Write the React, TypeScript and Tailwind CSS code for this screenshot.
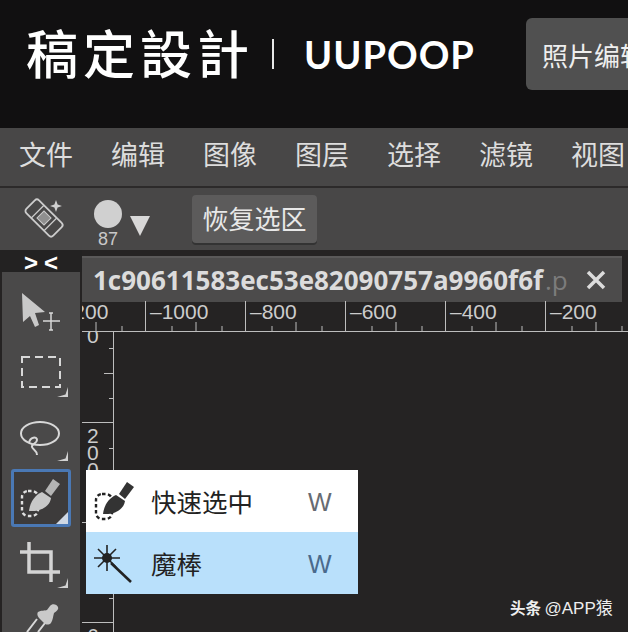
const cjk = "font-['Noto_Sans_CJK_SC',sans-serif]";

const menus = ["文件", "编辑", "图像", "图层", "选择", "滤镜", "视图"];
const hLabels = ["–1200", "–1000", "–800", "–600", "–400", "–200"];
const vLabels = ["0", "200", "400", "600"];

function Corner({ className }: { className: string }) {
  return (
    <svg width="11" height="10" viewBox="0 0 11 10" className={`absolute ${className}`}>
      <path d="M0 10H11V0L8.5 7.5Z" fill="#d2d2d2" />
    </svg>
  );
}

function Bandage() {
  return (
    <svg width="44" height="46" viewBox="0 0 44 46" fill="none">
      <g transform="rotate(45 21 22)" stroke="#cccccc" strokeWidth="1.8">
        <rect x="2" y="13" width="38" height="18" rx="3" />
        <path d="M12 13V31M30 13V31" strokeWidth="1.2" />
        <rect x="16" y="17" width="10" height="10" fill="#8f8f8f" strokeWidth="1" />
      </g>
      <path d="M33 4l1.6 4.4L39 10l-4.4 1.6L33 16l-1.6-4.4L27 10l4.4-1.6z" fill="#d0d0d0" />
    </svg>
  );
}

function ArrowTool() {
  return (
    <svg width="42" height="40" viewBox="0 0 42 40" fill="none">
      <path d="M2 2L25 21L15 22L19 34L15 36L10 25L3 31Z" fill="#c9c9c9" />
      <path d="M31 22V39M23 30H40M29 22H33M29 39H33" stroke="#d8d8d8" strokeWidth="1.5" />
    </svg>
  );
}

function MarqueeTool() {
  return (
    <svg width="42" height="34" viewBox="0 0 42 34" fill="none">
      <rect x="2" y="2" width="38" height="30" stroke="#d8d8d8" strokeWidth="2" strokeDasharray="8 5" />
    </svg>
  );
}

function LassoTool() {
  return (
    <svg width="42" height="46" viewBox="0 0 42 46" fill="none" stroke="#d8d8d8" strokeWidth="2">
      <ellipse cx="20" cy="16.5" rx="19" ry="11.5" />
      <path d="M9 26C10 20 17 19 17 23C17 27 11 27 12 30C13 33 17 33 17 38" />
    </svg>
  );
}

function QuickSelectIcon({ color, handle, dash }: { color: string; handle: string; dash: string }) {
  return (
    <svg width="42" height="40" viewBox="0 0 42 40" fill="none">
      <rect x="2" y="13" width="16" height="25" rx="6" stroke={dash} strokeWidth="2.4" strokeDasharray="3.5 2.5" />
      <path d="M9 33C10 24 15 17 22 14L31 20C30 28 21 34 9 33Z" fill={color} />
      <path d="M25 13L33 1L40 6L31 18Z" fill={handle} />
    </svg>
  );
}

function CropTool() {
  return (
    <svg width="42" height="44" viewBox="0 0 42 44" fill="none" stroke="#d4d4d4" strokeWidth="3.5">
      <path d="M0 11H31V41" />
      <path d="M9 1V31H40" />
    </svg>
  );
}

function DropperTool() {
  return (
    <svg width="42" height="30" viewBox="0 0 42 30" fill="none">
      <path d="M17 16L7 29M25 20L18 29" stroke="#d8d8d8" strokeWidth="2" />
      <path d="M18 9C21 7 25 8 27 7L30 3C32 0 37 1 38 4C39 6 37 8 34 10C33 13 33 17 31 20C29 22 26 22 24 20L19 15C17 13 17 10 18 9Z" fill="#c9c9c9" />
    </svg>
  );
}

function WandIcon() {
  return (
    <svg width="40" height="40" viewBox="0 0 40 40" fill="none" stroke="#222222">
      <path d="M17 20L37 39" strokeWidth="2.6" />
      <path d="M13 2V28M0 15H26M4 6L22 24M22 6L4 24" strokeWidth="1.6" />
      <circle cx="13" cy="15" r="5" fill="#222222" stroke="none" />
    </svg>
  );
}

function HTicks() {
  return (
    <svg width="100" height="14" viewBox="0 0 100 14" className="absolute bottom-0 left-0" stroke="#bdbdbd" strokeWidth="1">
      <path d="M26 14V9M50 14V5M76 14V9" />
    </svg>
  );
}

function VTicks() {
  return (
    <svg width="14" height="100" viewBox="0 0 14 100" className="absolute right-0 top-0" stroke="#bdbdbd" strokeWidth="1">
      <path d="M14 25.5H10M14 50.5H5M14 75.5H10" />
    </svg>
  );
}

export default function App() {
  return (
    <div className={`w-[628px] h-[632px] overflow-hidden relative flex flex-col bg-[#252323] ${cjk}`}>
      <header className="h-[128px] shrink-0 bg-[#111011] flex items-center pl-[26px] pb-[20px] text-white">
        <span className="shrink-0 pb-[4px] text-[52px] leading-none tracking-[5px] font-medium w-[246px] whitespace-nowrap">稿定設計</span>
        <span className="shrink-0 w-[2px] h-[30px] bg-white/90" />
        <span className="shrink-0 ml-[30px] w-[222px] text-[38px] leading-none font-bold font-['Lato',sans-serif] tracking-[1px]">UUPOOP</span>
        <div className="h-[72px] w-[120px] shrink-0 rounded-l-md bg-[#505050] flex items-center pl-4 overflow-hidden">
          <span className="text-[26px] text-[#eeeeee] whitespace-nowrap">照片编辑</span>
        </div>
      </header>

      <nav className="h-[60px] shrink-0 bg-[#484747] border-b-2 border-[#2c2a2a] flex items-center pl-[19px] pb-[8px] gap-[38px]">
        {menus.map((m) => (
          <span key={m} className="text-[27px] leading-none w-[54px] text-[#dddddd] whitespace-nowrap">{m}</span>
        ))}
      </nav>

      <div className="h-[62px] shrink-0 bg-[#484747] flex items-center pl-[23px]">
        <Bandage />
        <div className="ml-[27px] mt-[8px] w-[28px] flex flex-col items-center">
          <span className="w-[28px] h-[28px] rounded-full bg-[#d0d0d0]" />
          <span className="text-[18px] leading-[14px] mt-[4px] text-[#c8c8c8] font-light font-['Liberation_Sans',sans-serif]">87</span>
        </div>
        <svg width="20" height="20" viewBox="0 0 20 20" className="ml-[8px] mt-[14px]">
          <path d="M0 0H20L10 20Z" fill="#d8d8d8" />
        </svg>
        <button className="ml-[42px] w-[125px] h-[48px] rounded bg-[#5c5b5b] shadow-[0_2px_0_#333] pb-[4px] text-[26px] text-[#e8e8e8] whitespace-nowrap">恢复选区</button>
      </div>

      <div className="flex-1 flex min-h-0">
        <aside className="w-[82px] shrink-0 flex flex-col">
          <div className="h-[22px] bg-[#232222] flex items-center justify-center pl-[6px] pt-[3px]">
            <span className="text-[24px] leading-none font-bold text-white font-['Liberation_Sans',sans-serif] tracking-[6px]">&gt;&lt;</span>
          </div>
          <div className="flex-1 ml-[2px] w-[78px] bg-[#4a4949] flex flex-col items-center">
            <div className="relative mt-[19px]"><ArrowTool /></div>
            <div className="relative mt-[24px]"><MarqueeTool /><Corner className="right-[-6px] bottom-[-8px]" /></div>
            <div className="relative mt-[28px]"><LassoTool /><Corner className="right-[-6px] bottom-[2px]" /></div>
            <div className="relative mt-[6px] w-[60px] h-[58px] border-[3px] border-[#4a78b4] rounded-[3px] bg-[#3d3b3b] flex items-center justify-center">
              <QuickSelectIcon color="#c8c8c8" handle="#b4b4b4" dash="#e0e0e0" />
              <svg width="12" height="12" viewBox="0 0 12 12" className="absolute right-0 bottom-0">
                <path d="M12 0V12H0Z" fill="#cfd8e4" />
              </svg>
            </div>
            <div className="relative mt-[14px]"><CropTool /><Corner className="right-[-6px] bottom-[-3px]" /></div>
            <div className="relative mt-[18px]"><DropperTool /></div>
          </div>
        </aside>

        <main className="flex-1 min-w-0 flex flex-col">
          <div className="h-[52px] pt-[6px] shrink-0">
            <div className="h-[46px] w-[540px] bg-[#4c4b4b] border-t-2 border-[#5a5959] flex items-center pl-[11px] font-['Open_Sans',sans-serif] font-bold text-[26px] leading-none">
              <span className="w-[452px] shrink-0 text-[#dcdcdc] whitespace-nowrap">1c90611583ec53e82090757a9960f6f</span>
              <span className="w-[41px] shrink-0 text-[#7c7c7c] font-normal whitespace-nowrap">.p</span>
              <svg width="20" height="20" viewBox="0 0 20 20">
                <path d="M2 2L18 18M18 2L2 18" stroke="#dcdcdc" strokeWidth="3.5" />
              </svg>
            </div>
          </div>

          <div className="h-[31px] shrink-0 border-b border-[#bdbdbd] flex overflow-hidden -mt-[1px] font-['Liberation_Sans',sans-serif]">
            {hLabels.map((l, i) => (
              <div key={l} className={`relative w-[100px] shrink-0 h-full border-l border-[#bdbdbd] pl-[4px] text-[21px] leading-[20px] pt-[1px] text-[#cccccc] font-light ${i === 0 ? "-ml-[37px]" : ""}`}>
                {l}
                <HTicks />
              </div>
            ))}
          </div>

          <div className="flex-1 flex min-h-0">
            <div className="w-[32px] shrink-0 border-r border-[#bdbdbd] overflow-hidden font-['Liberation_Sans',sans-serif]">
              <div className="-mt-[10px] flex flex-col">
                {vLabels.map((l) => (
                  <div key={l} className="relative h-[100px] shrink-0 border-t border-[#bdbdbd] pt-[4px] pl-[5px] flex flex-col text-[21px] leading-[17px] text-[#cccccc]">
                    {l.split("").map((d, i) => (
                      <span key={i}>{d}</span>
                    ))}
                    <VTicks />
                  </div>
                ))}
              </div>
            </div>
            <div className="flex-1 bg-[#252323]" />
          </div>
        </main>
      </div>

      <div className="absolute left-[86px] top-[470px] w-[272px] text-[25.5px] leading-none">
        <div className="h-[62px] bg-white flex items-center pl-[8px]">
          <QuickSelectIcon color="#333333" handle="#333333" dash="#222222" />
          <span className="ml-[15px] w-[157px] shrink-0 text-[#222222]">快速选中</span>
          <span className="pt-[3px] text-[25px] font-light text-[#666b73] font-['Liberation_Sans',sans-serif]">W</span>
        </div>
        <div className="h-[62px] bg-[#b9e0fb] flex items-center pl-[8px]">
          <WandIcon />
          <span className="ml-[17px] w-[157px] shrink-0 text-[#222222]">魔棒</span>
          <span className="pt-[3px] text-[25px] font-light text-[#4a6a8c] font-['Liberation_Sans',sans-serif]">W</span>
        </div>
      </div>

      <div className="absolute left-[510px] top-[598px] text-[15.5px] leading-[18px] text-[#eeeeee] whitespace-nowrap">
        <span className="font-bold">头条</span> <span className="text-[17px] font-['Liberation_Sans','Noto_Sans_CJK_SC',sans-serif]">@APP猿</span>
      </div>
    </div>
  );
}
